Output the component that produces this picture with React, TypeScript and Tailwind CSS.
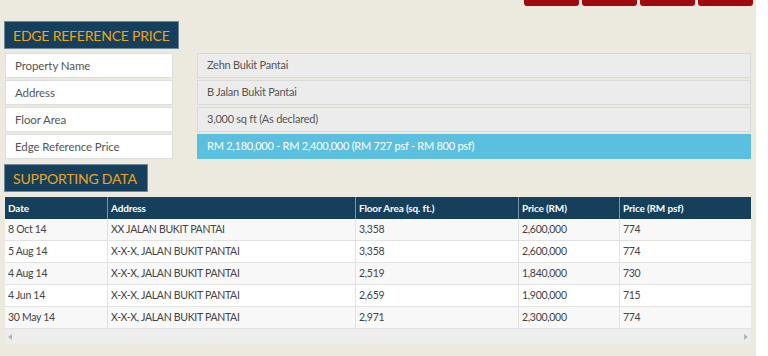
import React from 'react'

const FONT = "font-['Lato','Open_Sans',sans-serif]"

const DETAILS = [
  { label: 'Property Name', value: 'Zehn Bukit Pantai' },
  { label: 'Address', value: 'B Jalan Bukit Pantai' },
  { label: 'Floor Area', value: '3,000 sq ft (As declared)' },
  { label: 'Edge Reference Price', value: 'RM 2,180,000 - RM 2,400,000 (RM 727 psf - RM 800 psf)', highlight: true },
]

const ROWS = [
  ['8 Oct 14', 'XX JALAN BUKIT PANTAI', '3,358', '2,600,000', '774'],
  ['5 Aug 14', 'X-X-X, JALAN BUKIT PANTAI', '3,358', '2,600,000', '774'],
  ['4 Aug 14', 'X-X-X, JALAN BUKIT PANTAI', '2,519', '1,840,000', '730'],
  ['4 Jun 14', 'X-X-X, JALAN BUKIT PANTAI', '2,659', '1,900,000', '715'],
  ['30 May 14', 'X-X-X, JALAN BUKIT PANTAI', '2,971', '2,300,000', '774'],
]

const HEADERS = ['Date', 'Address', 'Floor Area (sq. ft.)', 'Price (RM)', 'Price (RM psf)']
const COLS = ['w-[102px]', 'w-[248px]', 'w-[163px]', 'w-[101px]', 'flex-1']

function SectionTitle({ children, width }: { children: React.ReactNode; width: string }) {
  return (
    <div className={`${width} h-[28px] bg-[#163f5c] border border-[#6f8798] flex items-center pl-[8px] text-[14px] text-[#eba51f] uppercase whitespace-nowrap tracking-[-0.2px]`}>
      {children}
    </div>
  )
}

export default function App() {
  return (
    <div className={`w-[768px] h-[356px] flex bg-white overflow-hidden ${FONT}`}>
      <div className="w-[756px] h-full bg-[#ece9de] flex flex-col">
        {/* top tabs */}
        <div className="h-[6px] flex justify-end gap-[3px] pr-[3px]">
          {[0, 1, 2, 3].map((i) => (
            <div key={i} className="w-[55px] h-[6px] bg-[#9e0a10] rounded-b-[3px]" />
          ))}
        </div>

        <div className="pl-[4px] pt-[15px]">
          <SectionTitle width="w-[175px]">Edge Reference Price</SectionTitle>
        </div>

        <div className="flex flex-col gap-[2px] pl-[5px] pr-[5px] pt-[4px]">
          {DETAILS.map((d) => (
            <div key={d.label} className="flex gap-[24px] h-[25px]">
              <div className="w-[168px] bg-white border border-[#dedede] flex items-center pl-[9px] text-[11.5px] tracking-[-0.1px] text-[#555] whitespace-nowrap">
                {d.label}
              </div>
              <div
                className={`flex-1 border flex items-center pl-[9px] text-[11px] tracking-[-0.25px] whitespace-nowrap ${
                  d.highlight ? 'bg-[#5bc0df] border-[#5bc0df] text-white' : 'bg-[#ececec] border-[#d9d9d9] text-[#555]'
                }`}
              >
                {d.value}
              </div>
            </div>
          ))}
        </div>

        <div className="pl-[4px] pt-[5px]">
          <SectionTitle width="w-[144px]">Supporting Data</SectionTitle>
        </div>

        <div className="mx-[5px] mt-[5px] w-[746px]">
          <div className="flex h-[22px] bg-[#163f5c] text-white text-[10px] tracking-[-0.15px] font-bold">
            {HEADERS.map((h, i) => (
              <div key={h} className={`${COLS[i]} flex items-center pl-[3px] whitespace-nowrap ${i > 0 ? 'border-l border-[#7e93a3]' : ''}`}>
                {h}
              </div>
            ))}
          </div>
          {ROWS.map((r, ri) => (
            <div key={ri} className={`flex h-[22px] text-[10.5px] tracking-[-0.3px] text-[#444] border-b border-[#e2e2e2] ${ri % 2 === 0 ? 'bg-[#f8f8f8]' : 'bg-white'}`}>
              {r.map((c, i) => (
                <div key={i} className={`${COLS[i]} flex items-center pl-[3px] whitespace-nowrap ${i > 0 ? 'border-l border-[#e2e2e2]' : ''}`}>
                  {c}
                </div>
              ))}
            </div>
          ))}
          <div className="h-[15px] bg-[#ededed] flex items-center justify-between px-[3px] text-[#b5b5b5]">
            <svg width="4" height="6" viewBox="0 0 4 6"><path d="M4 0 L0 3 L4 6 Z" fill="currentColor" /></svg>
            <svg width="4" height="6" viewBox="0 0 4 6"><path d="M0 0 L4 3 L0 6 Z" fill="currentColor" /></svg>
          </div>
        </div>
      </div>
    </div>
  )
}
